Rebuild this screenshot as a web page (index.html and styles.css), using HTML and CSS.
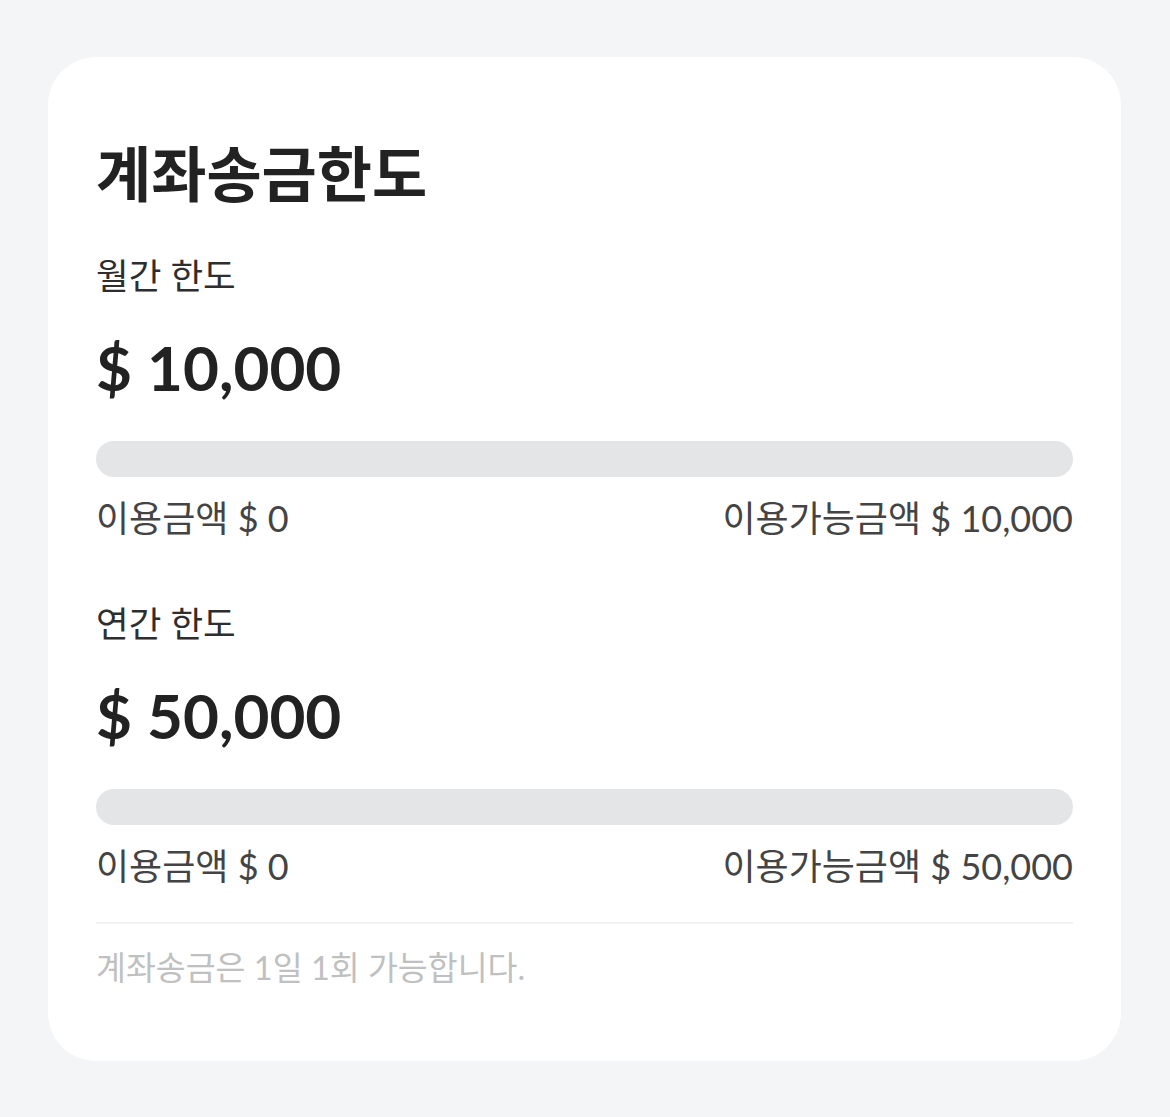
FILE: index.html
```html
<!DOCTYPE html>
<html lang="ko">
<head>
    <meta charset="UTF-8">
    <meta name="viewport" content="width=device-width, initial-scale=1.0">
    <title>계좌송금한도</title>
    <link rel="stylesheet" href="styles.css">
</head>
<body>
    <div class="card">
        <h1 class="title">계좌송금한도</h1>

        <section class="limit">
            <p class="limit-name">월간 한도</p>
            <p class="limit-amount">$ 10,000</p>
            <div class="bar"><div class="bar-fill" style="width: 0%"></div></div>
            <div class="limit-info">
                <span>이용금액 $ 0</span>
                <span>이용가능금액 $ 10,000</span>
            </div>
        </section>

        <section class="limit limit-second">
            <p class="limit-name">연간 한도</p>
            <p class="limit-amount">$ 50,000</p>
            <div class="bar"><div class="bar-fill" style="width: 0%"></div></div>
            <div class="limit-info">
                <span>이용금액 $ 0</span>
                <span>이용가능금액 $ 50,000</span>
            </div>
        </section>

        <hr class="divider">
        <p class="note">계좌송금은 1일 1회 가능합니다.</p>
    </div>
</body>
</html>
```

FILE: styles.css
```css
body {
    margin: 0;
    background-color: #f4f5f7;
    font-family: Lato, "Noto Sans CJK KR", sans-serif;
    color: #222222;
    padding: 57px 49px 56px 48px;
}

.card {
    background-color: #ffffff;
    border-radius: 48px;
    padding: 80px 48px 69px 48px;
}

.title {
    margin: 0;
    font-size: 60px;
    font-weight: 700;
    line-height: 74px;
}

.limit-name {
    margin: 41px 0 0 0;
    font-size: 35.5px;
    line-height: 48px;
    color: #2e2e2e;
}

.limit-second .limit-name {
    margin-top: 58px;
}

.limit-amount {
    margin: 27px 0 0 0;
    font-size: 62px;
    font-weight: 700;
    line-height: 80px;
}

.bar {
    margin-top: 34px;
    height: 36px;
    border-radius: 18px;
    background-color: #e4e5e7;
    overflow: hidden;
}

.bar-fill {
    height: 100%;
    background-color: #3b6cf6;
}

.limit-info {
    margin-top: 17px;
    display: flex;
    justify-content: space-between;
    font-size: 36px;
    line-height: 48px;
    color: #444444;
}

.divider {
    margin: 32px 0 0 0;
    border: none;
    height: 2px;
    background-color: #f1f1f1;
}

.note {
    margin: 20px 0 0 0;
    font-size: 32.5px;
    line-height: 48px;
    color: #c0c0c0;
}
```
